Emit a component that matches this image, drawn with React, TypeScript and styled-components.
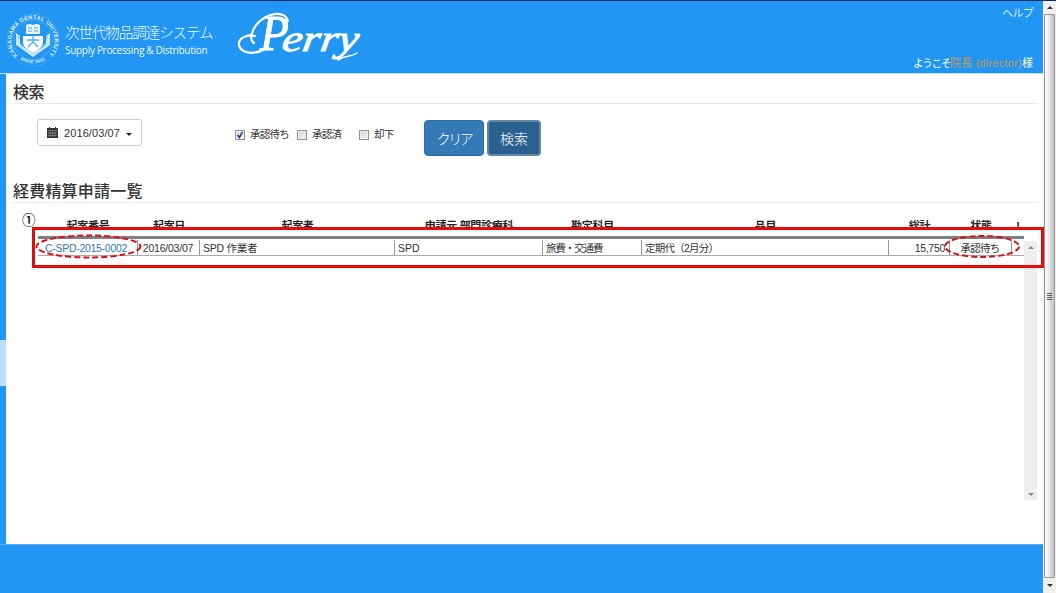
import React from 'react';
import styled, { createGlobalStyle } from 'styled-components';

const Global = createGlobalStyle`
  * { box-sizing: border-box; }
  body {
    margin: 0;
    overflow: hidden;
    background: #fff;
    color: #333;
    font-family: "Liberation Sans", "Noto Sans CJK JP", sans-serif;
  }
`;

const Window = styled.div`
  position: relative;
  display: flex;
  width: 1056px;
  height: 593px;
  border-top: 1px solid #0c2f66;
`;

const Page = styled.div`
  display: flex;
  flex-direction: column;
  width: 1043px;
`;

const Header = styled.header`
  display: flex;
  height: 72px;
  background: #2196f3;
  color: #fff;
`;

const Seal = styled.svg`
  width: 56px;
  height: 56px;
  margin: 11px 0 0 5px;
`;

const Titles = styled.div`
  width: 160px;
  margin: 21px 0 0 4px;
  white-space: nowrap;
`;

const Title = styled.div`
  height: 20px;
  font: 300 14.5px/20px "Noto Sans CJK JP", sans-serif;
  letter-spacing: -1.05px;
  color: #eaf6ff;
`;

const Subtitle = styled.div`
  font: 10px/17px "Open Sans", sans-serif;
  letter-spacing: -0.3px;
  color: #eaf6ff;
`;

const Wordmark = styled.svg`
  width: 130px;
  height: 62px;
  margin: 6px 0 0 10px;
`;

const Account = styled.div`
  display: flex;
  flex-direction: column;
  justify-content: space-between;
  align-items: flex-end;
  margin-left: auto;
  padding: 4px 10px 2px 0;
  font-size: 11px;
  line-height: 16px;
  white-space: nowrap;
`;

const HelpLink = styled.span`
  color: #d8eeff;
  letter-spacing: -0.7px;
`;

const Welcome = styled.span`
  display: flex;
`;

const Greeting = styled.span`
  width: 37px;
  font-size: 10.5px;
  letter-spacing: -1.2px;
`;

const UserName = styled.span`
  width: 72px;
  color: #c99a4b;
  letter-spacing: 0.2px;
`;

const Middle = styled.div`
  display: flex;
  height: 471px;
  border-top: 1px solid #bfe0fa;
`;

const Side = styled.div`
  display: flex;
  align-items: flex-start;
  width: 6px;
  padding-top: 266px;
  background: #2196f3;
`;

const SideHandle = styled.div`
  width: 6px;
  height: 46px;
  background: #bbdefb;
`;

const Main = styled.main`
  display: flex;
  flex-direction: column;
  width: 1037px;
  padding: 0 6px 0 7px;
`;

const Heading = styled.h2<{ $gap: number; $tracking: number }>`
  height: 23px;
  margin: ${p => p.$gap}px 0 0;
  border-bottom: 1px solid #eaeaea;
  font: 500 16px/21px "Noto Sans CJK JP", sans-serif;
  letter-spacing: ${p => p.$tracking}px;
  color: #333;
`;

const Filters = styled.div`
  display: flex;
  align-items: flex-start;
  height: 76px;
  padding: 15px 0 0 24px;
`;

const DateButton = styled.button`
  display: flex;
  align-items: center;
  width: 105px;
  height: 27px;
  padding: 0 8px 0 9px;
  border: 1px solid #ccc;
  border-radius: 3px;
  background: #fff;
  color: #333;
  font: 11px/16px "Liberation Sans", sans-serif;
  letter-spacing: 0.1px;
`;

const CalendarIcon = styled.svg`
  width: 11px;
  height: 11px;
  margin-right: 6px;
`;

const Caret = styled.span`
  margin: 3px 0 0 6px;
  border: 3px solid transparent;
  border-top-color: #222;
  border-bottom: 0;
`;

const Checks = styled.div`
  display: flex;
  width: 190px;
  margin: 7px 0 0 93px;
`;

const Check = styled.label<{ $width: number }>`
  display: flex;
  align-items: center;
  width: ${p => p.$width}px;
  height: 17px;
  font-size: 10.5px;
  line-height: 17px;
  letter-spacing: -0.75px;
  white-space: nowrap;
`;

const Box = styled.span`
  display: flex;
  width: 10px;
  height: 10px;
  margin: 1px 5px 0 0;
  border: 1px solid #929292;
  background: linear-gradient(135deg, #d0d3d7, #f5f5f5);
  box-shadow: inset 0 0 0 1px #f2f2f2;
`;

const Action = styled.button<{ $active?: boolean }>`
  width: ${p => (p.$active ? 54 : 60)}px;
  height: 36px;
  margin: 1px 4px 0 -1px;
  padding: 0;
  border: ${p => (p.$active ? '2px solid #6387a5' : '1px solid #2e6da4')};
  border-radius: 4px;
  background: ${p => (p.$active ? '#286090' : '#337ab7')};
  color: #fff;
  font: 300 14px/30px "Noto Sans CJK JP", sans-serif;
  letter-spacing: ${p => (p.$active ? 0 : -2.5)}px;
`;

const Listing = styled.div`
  display: flex;
  width: 999px;
  margin: 14px 0 0 25px;
`;

const COLUMNS = '100px 62px 195px 148px 99px 247px 61px 62px 12px';

const Table = styled.div`
  width: 986px;
`;

const HeadRow = styled.div`
  display: grid;
  grid-template-columns: ${COLUMNS};
  height: 22px;
  border-bottom: 3px solid #808080;
  font-size: 11px;
  font-weight: bold;
  line-height: 19px;
  color: #222;
`;

const HeadCell = styled.div`
  height: 12px;
  overflow: hidden;
  text-align: center;
  white-space: nowrap;
  letter-spacing: -0.3px;
`;

const BodyRow = styled.div`
  display: grid;
  grid-template-columns: ${COLUMNS};
  height: 17px;
  padding-top: 1px;
  border-bottom: 1px solid #aaa;
`;

const Cell = styled.div<{ $align?: string; $tracking?: number }>`
  height: 15px;
  padding: 0 4px 0 3px;
  border-right: 1px solid #999;
  font-size: 10.5px;
  line-height: 17px;
  letter-spacing: ${p => p.$tracking ?? 0}px;
  text-align: ${p => p.$align ?? 'left'};
  white-space: nowrap;
  &:last-child { border-right: 0; }
`;

const RequestLink = styled.a`
  padding-left: 4px;
  color: #337ab7;
`;

const ListScroll = styled.div`
  display: flex;
  flex-direction: column;
  justify-content: space-between;
  align-items: center;
  width: 13px;
  height: 259px;
  margin-top: 24px;
  padding: 5px 0 4px;
  background: #eee;
`;

const Arrow = styled.span<{ $down?: boolean; $color: string }>`
  border: 3px solid transparent;
  border-${p => (p.$down ? 'top' : 'bottom')}-color: ${p => p.$color};
  border-${p => (p.$down ? 'bottom' : 'top')}: 0;
`;

const Footer = styled.footer`
  flex: 1;
  border-top: 1px solid #5aaeef;
  background: #2196f3;
`;

const PageScroll = styled.div`
  display: flex;
  flex-direction: column;
  align-items: center;
  width: 13px;
  padding: 5px 0;
  background: #f0f0f0;
`;

const Thumb = styled.div`
  display: flex;
  flex-direction: column;
  align-items: center;
  justify-content: center;
  gap: 1px;
  width: 11px;
  height: 564px;
  margin: 5px 0 6px;
  border: 1px solid #979797;
  border-radius: 1px;
  background: linear-gradient(90deg, #f5f5f5 0 35%, #dcdcdf 55%, #c0c0c4);
`;

const Grip = styled.span`
  width: 5px;
  height: 1px;
  background: #555;
`;

const Marker = styled.div`
  position: absolute;
  left: 22px;
  top: 209px;
  width: 14px;
  font: 500 13.5px/18px "Noto Sans CJK JP", sans-serif;
  color: #000;
`;

const Frame = styled.div`
  position: absolute;
  left: 32px;
  top: 226px;
  width: 1012px;
  height: 41px;
  border: 3px solid #e60b0b;
`;

const Ring = styled.svg<{ $left: number; $width: number }>`
  position: absolute;
  left: ${p => p.$left}px;
  top: 233px;
  width: ${p => p.$width}px;
  height: 25px;
  fill: none;
  stroke: #d81118;
  stroke-width: 2;
  stroke-dasharray: 6 3;
`;

const heads = ['起案番号', '起案日', '起案者', '申請元 部門診療科', '勘定科目', '品目', '総計', '状態', '!'];

function UniversitySeal() {
  return (
    <Seal viewBox="0 0 56 56">
      <defs>
        <path id="rim" d="M12.5 43.5A21.5 21.5 0 1 1 43.5 43.5" />
        <path id="rimBottom" d="M15 47.5A24.5 24.5 0 0 0 41 47.5" />
      </defs>
      <g fill="none" stroke="#b9def8" strokeWidth="0.5">
        <circle cx="28" cy="28" r="26" strokeDasharray="1 1.5" />
        <circle cx="28" cy="28" r="19.5" strokeDasharray="1 1" />
      </g>
      <g fill="#dff2ff" fontFamily="Liberation Sans, sans-serif" fontWeight="bold" fontSize="5.6">
        <text textLength="99"><textPath href="#rim">KANAGAWA DENTAL UNIVERSITY</textPath></text>
        <text fontSize="4.4" textLength="26"><textPath href="#rimBottom">SINCE 1910</textPath></text>
      </g>
      <path d="M21 13q4-2 7 0 4-2 7 0v9H21z" fill="#e5f5ff" />
      <path d="M23 16h4m2 0h4m-10 3h4m2 0h4" stroke="#2196f3" strokeWidth="0.8" />
      <path d="M11 21l4 3v7l13 9 13-9v-7l4-3v12L28 45 11 33z" fill="#cae8fc" />
      <path d="M13 25l3 2v6l12 8 12-8v-6l3-2" fill="none" stroke="#2196f3" strokeWidth="0.8" />
      <path d="M18 24h20v7q-2 6-10 10-8-4-10-10z" fill="#fff" />
      <path d="M22 28h12M28 24v6l-5 5m5-5 5 5" fill="none" stroke="#4ba9f3" strokeWidth="1.3" />
    </Seal>
  );
}

function PerryLogo() {
  return (
    <Wordmark viewBox="0 0 130 62">
      <g fill="#fff" stroke="#fff" fontFamily="Liberation Serif, serif" fontStyle="italic">
        <text x="25" y="43" fontSize="50" strokeWidth="0.8" textLength="29" lengthAdjust="spacingAndGlyphs">P</text>
        <text transform="translate(46 44) skewX(-8) scale(1.24 1)" fontSize="37" strokeWidth="0.9">erry</text>
      </g>
      <g fill="none" stroke="#fff" strokeLinecap="round">
        <path d="M53 14C50 4 36 5 25 14 16 22 14 33 19 36" strokeWidth="2.2" />
        <path d="M30 42C20 48 6 47 4 38 3 31 12 27 20 29" strokeWidth="2.2" />
        <path d="M103 53c8-5 14-3 19-7" strokeWidth="1.6" />
      </g>
    </Wordmark>
  );
}

function CheckOption({ label, width, checked }: { label: string; width: number; checked?: boolean }) {
  return (
    <Check $width={width}>
      <Box>
        {checked && (
          <svg width="8" height="8" viewBox="0 0 8 8">
            <path d="M1.5 4 3.3 6.5 6.5 1" fill="none" stroke="#263c87" strokeWidth="1.5" />
          </svg>
        )}
      </Box>
      {label}
    </Check>
  );
}

export default function App() {
  return (
    <>
      <Global />
      <Window>
        <Page>
          <Header>
            <UniversitySeal />
            <Titles>
              <Title>次世代物品調達システム</Title>
              <Subtitle>Supply Processing &amp; Distribution</Subtitle>
            </Titles>
            <PerryLogo />
            <Account>
              <HelpLink>ヘルプ</HelpLink>
              <Welcome>
                <Greeting>ようこそ</Greeting>
                <UserName>院長 (director)</UserName>
                <span>様</span>
              </Welcome>
            </Account>
          </Header>
          <Middle>
            <Side><SideHandle /></Side>
            <Main>
              <Heading $gap={7} $tracking={-0.5}>検索</Heading>
              <Filters>
                <DateButton>
                  <CalendarIcon viewBox="0 0 11 11">
                    <path d="M0 1h2V0h1v1h5V0h1v1h2v10H0z" fill="#333" />
                    <path d="M0 3.5h11M1 6h9M1 8.5h9M3 4v6M5.5 4v6M8 4v6" stroke="#aaa" strokeWidth="0.5" />
                  </CalendarIcon>
                  2016/03/07
                  <Caret />
                </DateButton>
                <Checks>
                  <CheckOption label="承認待ち" width={62} checked />
                  <CheckOption label="承認済" width={62} />
                  <CheckOption label="却下" width={50} />
                </Checks>
                <Action>クリア</Action>
                <Action $active>検索</Action>
              </Filters>
              <Heading $gap={0} $tracking={0.2}>経費精算申請一覧</Heading>
              <Listing>
                <Table>
                  <HeadRow>
                    {heads.map(h => <HeadCell key={h}>{h}</HeadCell>)}
                  </HeadRow>
                  <BodyRow>
                    <Cell $tracking={-0.29}><RequestLink>C-SPD-2015-0002</RequestLink></Cell>
                    <Cell $tracking={-0.22} $align="center">2016/03/07</Cell>
                    <Cell $tracking={-0.25}>SPD 作業者</Cell>
                    <Cell>SPD</Cell>
                    <Cell $tracking={-1.1}>旅費・交通費</Cell>
                    <Cell $tracking={-0.75}>定期代（2月分）</Cell>
                    <Cell $tracking={-0.3} $align="right">15,750</Cell>
                    <Cell $tracking={-0.8} $align="center">承認待ち</Cell>
                    <Cell />
                  </BodyRow>
                </Table>
                <ListScroll>
                  <Arrow $color="#888" />
                  <Arrow $down $color="#888" />
                </ListScroll>
              </Listing>
            </Main>
          </Middle>
          <Footer />
        </Page>
        <PageScroll>
          <Arrow $color="#333" />
          <Thumb><Grip /><Grip /><Grip /><Grip /></Thumb>
          <Arrow $down $color="#333" />
        </PageScroll>
        <Marker>①</Marker>
        <Frame />
        <Ring $left={35} $width={107}><ellipse cx="53.5" cy="12.5" rx="52" ry="11" /></Ring>
        <Ring $left={943} $width={78}><ellipse cx="39" cy="12.5" rx="37" ry="10.5" /></Ring>
      </Window>
    </>
  );
}
